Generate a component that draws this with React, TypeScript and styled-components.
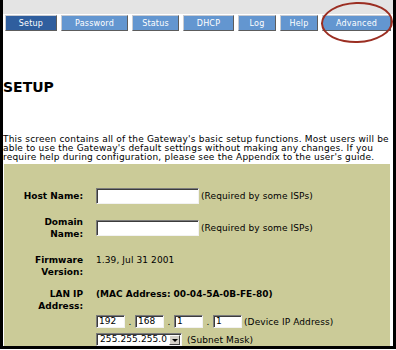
import React from 'react';
import styled, { createGlobalStyle } from 'styled-components';

const GlobalStyle = createGlobalStyle`
  html, body {
    margin: 0;
    padding: 0;
    background: #ffffff;
  }
  body {
    font-family: 'DejaVu Sans', Verdana, sans-serif;
    color: #000000;
  }
`;

const Frame = styled.div`
  position: relative;
  box-sizing: border-box;
  width: 396px;
  height: 349px;
  overflow: hidden;
  border-left: 3px solid #000;
  border-right: 3px solid #000;
  border-bottom: 3px solid #000;
  background: #fff;
`;

const TopBar = styled.div`
  height: 14px;
  background: #e4e4e4;
`;

const TabRow = styled.div`
  display: flex;
  gap: 4px;
  margin-top: 1px;
  padding-left: 2px;
  height: 16px;
`;

const Tab = styled.div<{ $w: number; $active?: boolean }>`
  box-sizing: border-box;
  width: ${(p) => p.$w}px;
  height: 16px;
  display: flex;
  align-items: center;
  justify-content: center;
  background: ${(p) => (p.$active ? '#2f5e9e' : '#6396d0')};
  border-top: 1px solid #c9ccd2;
  border-left: 1px solid #c9ccd2;
  border-right: 1px solid #5c5c5c;
  border-bottom: 1px solid #5c5c5c;
  color: #ffffff;
  font-size: 8px;
  letter-spacing: 0.2px;
`;

const Callout = styled.div`
  position: absolute;
  left: 318px;
  top: 2px;
  width: 72px;
  height: 41px;
  box-sizing: border-box;
  border: 2px solid #9b2e22;
  border-radius: 50%;
  transform: rotate(-2deg);
`;

const Heading = styled.h1`
  margin: 48px 0 0;
  font-size: 14px;
  line-height: 16px;
  font-weight: bold;
`;

const Intro = styled.p`
  margin: 40px 0 0;
  font-size: 9px;
  line-height: 9px;
  letter-spacing: 0.2px;
  width: 390px;
`;

const Panel = styled.div`
  margin: 2px 3px 0 1px;
  padding-top: 24px;
  height: 200px;
  background: #cbcb98;
`;

const Row = styled.div<{ $gap?: number }>`
  display: grid;
  grid-template-columns: 79px 1fr;
  column-gap: 13px;
  align-items: center;
  margin-top: ${(p) => p.$gap ?? 0}px;
  font-size: 9px;
  line-height: 12px;
`;

const Label = styled.div`
  font-weight: bold;
  text-align: right;
`;

const Field = styled.div<{ $top?: boolean }>`
  display: flex;
  align-items: center;
  align-self: ${(p) => (p.$top ? 'start' : 'center')};
`;

const Value = styled.span<{ $bold?: boolean }>`
  font-weight: ${(p) => (p.$bold ? 'bold' : 'normal')};
  letter-spacing: ${(p) => (p.$bold ? 0 : 0.1)}px;
`;

const Note = styled.span`
  margin-left: 2px;
  letter-spacing: 0.1px;
  white-space: nowrap;
`;

const TextBox = styled.div<{ $w: number; $h: number }>`
  box-sizing: border-box;
  width: ${(p) => p.$w}px;
  height: ${(p) => p.$h}px;
  background: #fff;
  border-top: 1px solid #7b7b7b;
  border-left: 1px solid #7b7b7b;
  border-right: 1px solid #f2f2f2;
  border-bottom: 1px solid #f2f2f2;
  box-shadow: inset 1px 1px 0 #3c3c3c;
  padding: 0 2px;
  font-size: 9px;
  line-height: 11px;
  flex-shrink: 0;
`;

const Dot = styled.span`
  width: 10px;
  text-align: center;
  flex-shrink: 0;
`;

const Select = styled.div`
  box-sizing: border-box;
  width: 86px;
  height: 13px;
  display: flex;
  background: #fff;
  border-top: 1px solid #7b7b7b;
  border-left: 1px solid #7b7b7b;
  border-right: 1px solid #f2f2f2;
  border-bottom: 1px solid #f2f2f2;
  box-shadow: inset 1px 1px 0 #3c3c3c;
  font-size: 9px;
  line-height: 11px;
  flex-shrink: 0;
`;

const SelectText = styled.span`
  flex: 1;
  padding-left: 3px;
  letter-spacing: 0.1px;
`;

const SelectButton = styled.span`
  width: 11px;
  box-sizing: border-box;
  margin: 1px 1px 0 0;
  background: #d4d0c8;
  border-top: 1px solid #ffffff;
  border-left: 1px solid #ffffff;
  border-right: 1px solid #404040;
  border-bottom: 1px solid #404040;
  display: flex;
  align-items: center;
  justify-content: center;

  &::after {
    content: '';
    border-left: 3px solid transparent;
    border-right: 3px solid transparent;
    border-top: 3px solid #000;
  }
`;

const tabs = [
  { name: 'Setup', w: 52, active: true },
  { name: 'Password', w: 67 },
  { name: 'Status', w: 47 },
  { name: 'DHCP', w: 51 },
  { name: 'Log', w: 38 },
  { name: 'Help', w: 38 },
  { name: 'Advanced', w: 69 },
];

const ip = ['192', '168', '1', '1'];

function App() {
  return (
    <>
      <GlobalStyle />
      <Frame>
        <TopBar />
        <TabRow>
          {tabs.map((t) => (
            <Tab key={t.name} $w={t.w} $active={t.active}>
              {t.name}
            </Tab>
          ))}
        </TabRow>
        <Callout />
        <Heading>SETUP</Heading>
        <Intro>
          This screen contains all of the Gateway's basic setup functions. Most users will be
          able to use the Gateway's default settings without making any changes. If you
          require help during configuration, please see the Appendix to the user's guide.
        </Intro>
        <Panel>
          <Row>
            <Label>Host Name:</Label>
            <Field>
              <TextBox $w={103} $h={16} />
              <Note>(Required by some ISPs)</Note>
            </Field>
          </Row>
          <Row $gap={12}>
            <Label>
              Domain
              <br />
              Name:
            </Label>
            <Field>
              <TextBox $w={103} $h={16} />
              <Note>(Required by some ISPs)</Note>
            </Field>
          </Row>
          <Row $gap={14}>
            <Label>
              Firmware
              <br />
              Version:
            </Label>
            <Field $top>
              <Value>1.39, Jul 31 2001</Value>
            </Field>
          </Row>
          <Row $gap={10}>
            <Label>
              LAN IP
              <br />
              Address:
            </Label>
            <Field $top>
              <Value $bold>(MAC Address: 00-04-5A-0B-FE-80)</Value>
            </Field>
          </Row>
          <Row $gap={3}>
            <span />
            <Field>
              {ip.map((v, i) => (
                <React.Fragment key={i}>
                  {i > 0 && <Dot>.</Dot>}
                  <TextBox $w={29} $h={13}>
                    {v}
                  </TextBox>
                </React.Fragment>
              ))}
              <Note>(Device IP Address)</Note>
            </Field>
          </Row>
          <Row $gap={5}>
            <span />
            <Field>
              <Select>
                <SelectText>255.255.255.0</SelectText>
                <SelectButton />
              </Select>
              <Note>&nbsp;(Subnet Mask)</Note>
            </Field>
          </Row>
        </Panel>
      </Frame>
    </>
  );
}

export default App;
